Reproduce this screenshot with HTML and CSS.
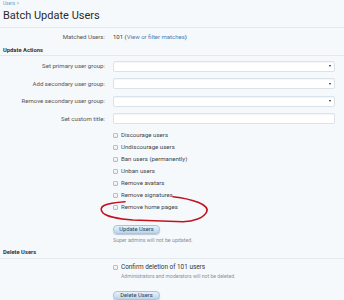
FILE: index.html
```html
<!DOCTYPE html>
<html lang="en">
<head>
  <meta charset="UTF-8">
  <title>Batch Update Users</title>
  <link rel="stylesheet" href="styles.css">
</head>
<body>
<div class="page">
  <div class="crumbs"><a href="#">Users</a> &gt;</div>
  <h1>Batch Update Users</h1>

  <div class="row matched">
    <div class="label">Matched Users:</div>
    <div class="value">101 (<a href="#">View or filter matches</a>)</div>
  </div>

  <h3 class="heading">Update Actions</h3>

  <div class="fields">
    <div class="row">
      <div class="label">Set primary user group:</div>
      <div class="value"><span class="select"></span></div>
    </div>
    <div class="row">
      <div class="label">Add secondary user group:</div>
      <div class="value"><span class="select"></span></div>
    </div>
    <div class="row">
      <div class="label">Remove secondary user group:</div>
      <div class="value"><span class="select"></span></div>
    </div>
    <div class="row">
      <div class="label">Set custom title:</div>
      <div class="value"><span class="textbox"></span></div>
    </div>
  </div>

  <div class="row">
    <div class="label"></div>
    <div class="value">
      <ul class="checks">
        <li><span class="box"></span>Discourage users</li>
        <li><span class="box"></span>Undiscourage users</li>
        <li><span class="box"></span>Ban users (permanently)</li>
        <li><span class="box"></span>Unban users</li>
        <li><span class="box"></span>Remove avatars</li>
        <li><span class="box"></span>Remove signatures</li>
        <li><span class="box"></span>Remove home pages</li>
      </ul>
      <button class="button update">Update Users</button>
      <p class="hint">Super admins will not be updated.</p>
    </div>
  </div>

  <h3 class="heading delete-head">Delete Users</h3>

  <div class="row">
    <div class="label"></div>
    <div class="value">
      <div class="confirm"><span class="box"></span>Confirm deletion of 101 users</div>
      <p class="hint explain">Administrators and moderators will not be deleted.</p>
      <button class="button remove">Delete Users</button>
    </div>
  </div>

  <svg class="markup" width="116" height="32" viewBox="0 0 116 32">
    <path d="M75,3.7 C95,6 112,12 108.7,18.7 C106,25 95,28.5 85,28.7 L35,27 C20,26 8,23 5,20 C2,17 3,14 6,12.5 C9,11 15,9.5 27,8.7" />
  </svg>
</div>
</body>
</html>
```

FILE: styles.css
```css
*{
  margin: 0;
  padding: 0;
  box-sizing: border-box;
}
body{
  background: #f6f9fc;
  font-family: Roboto, "Liberation Sans", sans-serif;
  color: #444;
}
a{
  color: #4a7bb0;
  text-decoration: none;
}
.page{
  position: relative;
  width: 344px;
  height: 300px;
  overflow: hidden;
}
.crumbs{
  font-size: 4.8px;
  line-height: 6px;
  padding: 1px 3px 0;
  color: #7a9cc4;
}
.crumbs a{
  color: #7a9cc4;
}
h1{
  font-size: 11px;
  font-weight: normal;
  line-height: 14px;
  color: #2a2a2a;
  padding: 2.3px 3px 4px;
  border-bottom: 1px solid #e2e9ef;
}
.row{
  display: grid;
  grid-template-columns: 105px 1fr;
  column-gap: 8px;
  align-items: center;
}
.label{
  font-size: 6.1px;
  line-height: 6px;
  text-align: right;
  color: #555;
  white-space: nowrap;
}
.value{
  font-size: 6px;
  line-height: 6px;
  padding-right: 9px;
}
.matched{
  padding: 6px 0;
}
.matched .value{
  color: #333;
}
.heading{
  font-size: 5.8px;
  line-height: 6px;
  font-weight: bold;
  color: #333;
  padding: 0.5px 3px 2.5px;
  border-bottom: 1px solid #e2e9ef;
}
.fields{
  display: flex;
  flex-direction: column;
  gap: 6.5px;
  padding-top: 4.5px;
}
.select,
.textbox{
  display: block;
  position: relative;
  height: 11px;
  background: #fff;
  border: 1px solid #dae2ea;
  border-radius: 2px;
  box-shadow: inset 0 1px 1px rgba(0,0,0,0.04);
}
.textbox{
  height: 10.5px;
}
.select:after{
  content: "";
  position: absolute;
  right: 3px;
  top: 3.5px;
  border-left: 1.5px solid transparent;
  border-right: 1.5px solid transparent;
  border-top: 2px solid #222;
}
.checks{
  list-style: none;
  margin-top: 5.3px;
}
.checks li,
.confirm{
  display: flex;
  align-items: center;
  height: 12px;
  color: #444;
  font-size: 6.1px;
}
.box{
  display: inline-block;
  flex: none;
  width: 5px;
  height: 5px;
  margin-right: 3px;
  border: 0.6px solid #b5bdc5;
  border-radius: 1px;
  background: linear-gradient(#fdfdfd, #e6e9ec);
}
.button{
  display: block;
  width: 47px;
  height: 9px;
  margin-top: 12px;
  font-family: Roboto, "Liberation Sans", sans-serif;
  font-size: 5.8px;
  line-height: 7px;
  color: #2c4663;
  background: linear-gradient(#e8f2fa, #bcd5ea);
  border: 0.6px solid #aac4da;
  border-radius: 4px;
  box-shadow: 0 1px 1px rgba(80,110,140,0.35);
}
.hint{
  font-size: 5.3px;
  line-height: 6px;
  margin-top: 3px;
  color: #8a9099;
  white-space: nowrap;
}
.delete-head{
  margin-top: 5.7px;
  padding-bottom: 2.3px;
}
.confirm{
  margin-top: 3px;
  font-size: 6.4px;
  height: 11px;
  color: #333;
}
.explain{
  margin-top: 0;
  padding-left: 8px;
  font-size: 5.1px;
}
.remove{
  margin-top: 12.5px;
}
.markup{
  position: absolute;
  left: 98px;
  top: 193px;
}
.markup path{
  fill: none;
  stroke: #c4121c;
  stroke-width: 1.6;
  stroke-linecap: round;
}
```
